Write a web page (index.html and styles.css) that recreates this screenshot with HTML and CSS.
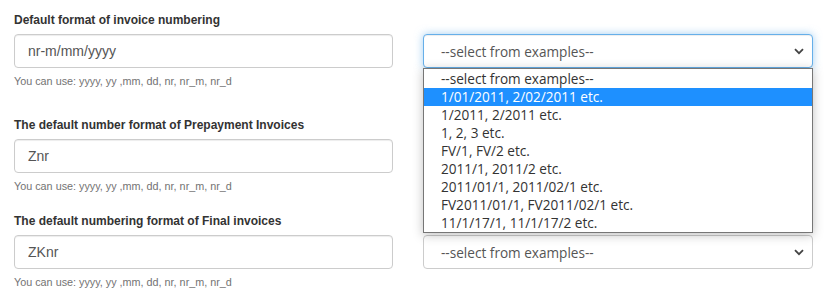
FILE: index.html
```html
<!DOCTYPE html>
<html lang="en">
<head>
  <meta charset="UTF-8">
  <title>Invoice numbering</title>
  <link rel="stylesheet" href="styles.css">
</head>
<body>

<div class="settings">

  <div class="row row-first">
    <div class="field">
      <label class="field-label" for="format-invoice">Default format of invoice numbering</label>
      <input type="text" class="text-input" id="format-invoice" value="nr-m/mm/yyyy">
      <p class="help">You can use: yyyy, yy ,mm, dd, nr, nr_m, nr_d</p>
    </div>
    <div class="picker">
      <div class="select is-focused">
        <span>--select from examples--</span>
        <svg class="chevron" width="10" height="7" viewBox="0 0 10 7"><path d="M1 1.2 5 5.2 9 1.2" fill="none" stroke="#444" stroke-width="1.8"/></svg>
      </div>
      <!-- open list of the first select -->
      <ul class="options">
        <li>--select from examples--</li>
        <li class="is-active">1/01/2011, 2/02/2011 etc.</li>
        <li>1/2011, 2/2011 etc.</li>
        <li>1, 2, 3 etc.</li>
        <li>FV/1, FV/2 etc.</li>
        <li>2011/1, 2011/2 etc.</li>
        <li>2011/01/1, 2011/02/1 etc.</li>
        <li>FV2011/01/1, FV2011/02/1 etc.</li>
        <li>11/1/17/1, 11/1/17/2 etc.</li>
      </ul>
    </div>
  </div>

  <div class="row">
    <div class="field">
      <label class="field-label" for="format-prepayment">The default number format of Prepayment Invoices</label>
      <input type="text" class="text-input" id="format-prepayment" value="Znr">
      <p class="help">You can use: yyyy, yy ,mm, dd, nr, nr_m, nr_d</p>
    </div>
    <div class="picker">
      <div class="select is-covered">
        <svg class="chevron" width="10" height="7" viewBox="0 0 10 7"><path d="M1 1.2 5 5.2 9 1.2" fill="none" stroke="#444" stroke-width="1.8"/></svg>
      </div>
    </div>
  </div>

  <div class="row">
    <div class="field">
      <label class="field-label" for="format-final">The default numbering format of Final invoices</label>
      <input type="text" class="text-input" id="format-final" value="ZKnr">
      <p class="help">You can use: yyyy, yy ,mm, dd, nr, nr_m, nr_d</p>
    </div>
    <div class="picker">
      <div class="select">
        <span>--select from examples--</span>
        <svg class="chevron" width="10" height="7" viewBox="0 0 10 7"><path d="M1 1.2 5 5.2 9 1.2" fill="none" stroke="#444" stroke-width="1.8"/></svg>
      </div>
    </div>
  </div>

</div>

</body>
</html>
```

FILE: styles.css
```css
body {
  margin: 0;
  background: #fff;
  font-family: "Liberation Sans", Arial, sans-serif;
  color: #333;
}
.settings {
  padding: 11px 0 0 14px;
}
.row {
  display: grid;
  grid-template-columns: 379px 390px;
  column-gap: 30px;
  margin-bottom: 18px;
}
.row-first {
  margin-bottom: 27px;
}
.field-label {
  display: block;
  font-size: 12px;
  font-weight: bold;
  line-height: 18px;
  margin-bottom: 5px;
}
.text-input {
  display: block;
  box-sizing: border-box;
  width: 100%;
  height: 34px;
  padding: 6px 12px 6px 13px;
  font-family: "Liberation Sans", Arial, sans-serif;
  font-size: 14px;
  color: #555;
  border: 1px solid #ccc;
  border-radius: 4px;
  box-shadow: inset 0 1px 1px rgba(0, 0, 0, .075);
  outline: none;
}
.help {
  margin: 5px 0 0;
  font-size: 10.8px;
  line-height: 16px;
  color: #737373;
}
.picker {
  position: relative;
  padding-top: 23px;
}
.select {
  box-sizing: border-box;
  height: 34px;
  display: flex;
  align-items: center;
  justify-content: space-between;
  padding: 0 8px 0 17px;
  font-family: "Open Sans", "Noto Sans", sans-serif;
  font-size: 13.6px;
  color: #555;
  border: 1px solid #ccc;
  border-radius: 4px;
  background: #fff;
}
.select.is-covered {
  justify-content: flex-end;
}
.select.is-focused {
  border-color: #66afe9;
  box-shadow: inset 0 1px 1px rgba(0, 0, 0, .075), 0 0 8px rgba(102, 175, 233, .6);
}
.options {
  position: absolute;
  top: 57px;
  left: 0;
  right: 0;
  margin: 0;
  padding: 1px 0 0;
  list-style: none;
  background: #fff;
  border: 1px solid #767676;
  box-shadow: 0 2px 10px rgba(0, 0, 0, .25);
  font-family: "Open Sans", "Noto Sans", sans-serif;
  font-size: 13.6px;
  color: #333;
  z-index: 2;
}
.options li {
  height: 18px;
  line-height: 18px;
  padding-left: 17px;
  white-space: nowrap;
}
.options li.is-active {
  background: #1e90ff;
  color: #fff;
}
```
